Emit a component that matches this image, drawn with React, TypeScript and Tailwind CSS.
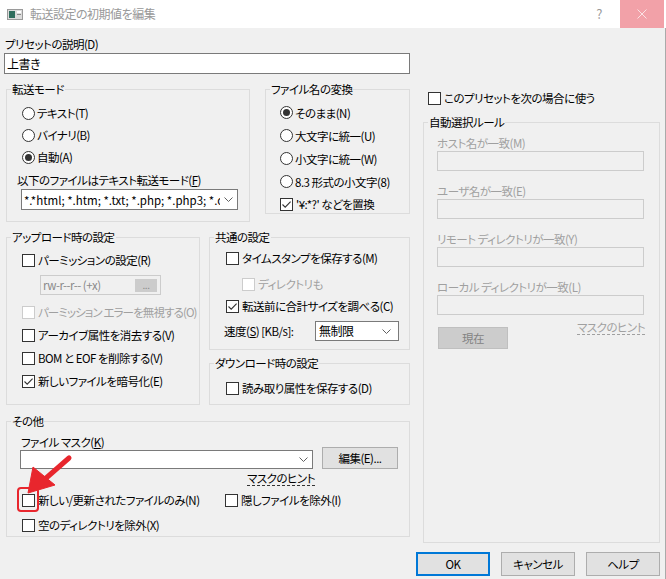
import React from "react";

const Chevron = () => (
  <svg width="9" height="5" viewBox="0 0 9 5">
    <path d="M0.5 0.5 L4.5 4.5 L8.5 0.5" fill="none" stroke="#606060" strokeWidth="1" />
  </svg>
);

const Check = ({
  label,
  checked,
  disabled,
  className = "",
  textClass = "",
}: {
  label: React.ReactNode;
  checked?: boolean;
  disabled?: boolean;
  className?: string;
  textClass?: string;
}) => (
  <div className={`flex items-center h-[16px] ${className}`}>
    <span
      className={`w-[13px] h-[13px] shrink-0 border bg-white flex items-center justify-center ${
        disabled ? "border-[#cccccc]" : "border-[#333333]"
      }`}
    >
      {checked && (
        <svg width="11" height="11" viewBox="0 0 11 11">
          <path d="M1.5 5.5 L4.2 8.2 L9.6 2.6" fill="none" stroke="#333333" strokeWidth="1.1" />
        </svg>
      )}
    </span>
    <span className={`ml-[3px] whitespace-nowrap ${disabled ? "text-[#a0a0a0]" : ""} ${textClass}`}>{label}</span>
  </div>
);

const Radio = ({
  label,
  checked,
  className = "",
}: {
  label: React.ReactNode;
  checked?: boolean;
  className?: string;
}) => (
  <div className={`flex items-center ${className}`}>
    <span className="w-[13px] h-[13px] shrink-0 rounded-full border border-[#333333] bg-white flex items-center justify-center">
      {checked && <span className="w-[7px] h-[7px] rounded-full bg-[#333333]" />}
    </span>
    <span className="ml-[2px] whitespace-nowrap">{label}</span>
  </div>
);

const Group = ({
  title,
  className = "",
  children,
}: {
  title: string;
  className?: string;
  children?: React.ReactNode;
}) => (
  <fieldset className={`border border-[#dcdcdc] shrink-0 min-w-0 ${className}`}>
    <legend className="ml-[4px] px-[1px] leading-[14px]">{title}</legend>
    {children}
  </fieldset>
);

const Mn = ({ c }: { c: string }) => <span className="underline underline-offset-[1px]">{c}</span>;

const DisabledField = ({ label }: { label: string }) => (
  <>
    <div className="h-[16px] leading-[16px] text-[#a0a0a0] whitespace-nowrap">{label}</div>
    <div className="w-[207px] h-[20px] border border-[#cccccc] bg-[#f0f0f0]" />
  </>
);

const Btn = ({ children, primary }: { children: React.ReactNode; primary?: boolean }) => (
  <div
    className={`w-[74px] h-[24px] flex items-center justify-center bg-[#e1e1e1] ${
      primary ? "border-2 border-[#0078d7]" : "border border-[#adadad]"
    }`}
  >
    {children}
  </div>
);

export default function App() {
  return (
    <div className="w-[666px] h-[579px] bg-[#f0f0f0] flex flex-col relative overflow-hidden text-[11.5px] tracking-[-0.5px] leading-[16px] text-black font-['Noto_Sans_CJK_JP',sans-serif] [font-feature-settings:'palt']">
      {/* title bar */}
      <div className="h-[28px] bg-white flex items-center shrink-0">
        <svg className="ml-[7px]" width="16" height="11" viewBox="0 0 16 11">
          <rect x="0.5" y="0.5" width="15" height="10" fill="#dcdcdc" stroke="#9a9a9a" />
          <rect x="2" y="2" width="6" height="7" fill="#2f6e5e" />
          <rect x="10" y="2" width="4" height="2" fill="#ffffff" />
          <rect x="10" y="5" width="4" height="1" fill="#8a8a8a" />
        </svg>
        <span className="ml-[7px] text-[12px] text-[#999999]">転送設定の初期値を編集</span>
        <span className="ml-auto mr-[18px] text-[#9a9a9a] text-[13px]">?</span>
        <div className="w-[44px] h-[28px] mr-[2px] bg-[#f2a1a8] flex items-center justify-center">
          <svg width="10" height="10" viewBox="0 0 10 10">
            <path d="M0.5 0.5 L9.5 9.5 M9.5 0.5 L0.5 9.5" stroke="#fbe2e4" strokeWidth="1" />
          </svg>
        </div>
      </div>

      <div className="flex-1 flex flex-col border-r border-[#aaaaaa]">
        <div className="flex">
          {/* left column */}
          <div className="ml-[4px] w-[406px] flex flex-col">
            <div className="mt-[8px] h-[16px] pl-[1px] whitespace-nowrap">プリセットの説明(D)</div>
            <div className="mt-[1px] h-[21px] border border-[#7a7a7a] bg-white flex items-center pl-[2px] text-[12px]">上書き</div>

            <div className="mt-[8px] flex items-start">
              <Group title="転送モード" className="ml-[2px] w-[244px] h-[140px]">
                <div className="mt-[6px] flex flex-col">
                  <Radio className="ml-[15px] h-[22px]" label="テキスト(T)" />
                  <Radio className="ml-[15px] h-[22px]" label="バイナリ(B)" />
                  <Radio className="ml-[15px] h-[22px]" label="自動(A)" checked />
                  <div className="mt-[4px] ml-[10px] h-[16px] whitespace-nowrap">
                    以下のファイルはテキスト転送モード(<Mn c="F" />)
                  </div>
                  <div className="mt-[1px] ml-[14px] w-[217px] h-[21px] border border-[#7a7a7a] bg-white flex items-center pl-[2px] pr-[4px]">
                    <span className="flex-1 overflow-hidden whitespace-nowrap tracking-normal">
                      *.*html; *.htm; *.txt; *.php; *.php3; *.cgi; *.c; *.cpp; *.h
                    </span>
                    <span className="ml-[4px]">
                      <Chevron />
                    </span>
                  </div>
                </div>
              </Group>

              <Group title="ファイル名の変換" className="ml-[15px] w-[145px] h-[132px]">
                <div className="mt-[5px] ml-[14px] flex flex-col">
                  <Radio className="h-[23px]" label="そのまま(N)" checked />
                  <Radio className="h-[23px]" label="大文字に統一(U)" />
                  <Radio className="h-[23px]" label="小文字に統一(W)" />
                  <Radio className="h-[23px]" label="8.3 形式の小文字(8)" />
                  <Check className="h-[22px]" label="'¥:*?' などを置換" checked />
                </div>
              </Group>
            </div>

            <div className="mt-[8px] flex items-start">
              <Group title="アップロード時の設定" className="ml-[2px] w-[194px] h-[175px]">
                <div className="flex flex-col">
                  <Check className="mt-[8px] ml-[15px]" label="パーミッションの設定(R)" />
                  <div className="mt-[7px] ml-[33px] w-[121px] h-[20px] border border-[#cccccc] bg-[#f0f0f0] flex items-center justify-between pl-[2px] pr-[3px]">
                    <span className="text-[#8a8a8a] whitespace-nowrap">rw-r--r-- (+x)</span>
                    <span className="w-[22px] h-[13px] bg-[#cccccc] text-[#8a8a8a] text-[10px] leading-[10px] flex items-center justify-center">
                      ...
                    </span>
                  </div>
                  <Check
                    className="mt-[9px] ml-[15px]"
                    textClass="tracking-[-0.9px]"
                    label="パーミッション エラーを無視する(O)"
                    disabled
                  />
                  <Check className="mt-[7px] ml-[15px]" label="アーカイブ属性を消去する(V)" />
                  <Check className="mt-[7px] ml-[15px]" label="BOM と EOF を削除する(V)" />
                  <Check className="mt-[7px] ml-[15px]" label="新しいファイルを暗号化(E)" checked />
                </div>
              </Group>

              <div className="ml-[9px] w-[201px] flex flex-col">
                <Group title="共通の設定" className="w-[201px] h-[120px]">
                  <div className="flex flex-col">
                    <Check className="mt-[6px] ml-[16px]" label="タイムスタンプを保存する(M)" />
                    <Check className="mt-[10px] ml-[32px]" label="ディレクトリも" disabled />
                    <Check className="mt-[6px] ml-[16px]" label="転送前に合計サイズを調べる(C)" checked />
                    <div className="mt-[7px] ml-[14px] w-[175px] h-[20px] flex items-center justify-between">
                      <span className="whitespace-nowrap">
                        速度(<Mn c="S" />) [KB/s]:
                      </span>
                      <div className="w-[84px] h-[20px] border border-[#7a7a7a] bg-white flex items-center justify-between pl-[3px] pr-[7px]">
                        <span className="text-[12px]">無制限</span>
                        <Chevron />
                      </div>
                    </div>
                  </div>
                </Group>
                <Group title="ダウンロード時の設定" className="mt-[6px] w-[201px] h-[49px]">
                  <Check className="mt-[10px] ml-[16px]" label="読み取り属性を保存する(D)" />
                </Group>
              </div>
            </div>

            <Group title="その他" className="mt-[9px] ml-[2px] w-[404px] h-[123px]">
              <div className="flex flex-col">
                <div className="mt-[6px] ml-[14px] h-[16px] whitespace-nowrap">
                  ファイル マスク(<Mn c="K" />)
                </div>
                <div className="-mt-[3px] ml-[13px] flex items-end">
                  <div className="w-[293px] h-[19px] border border-[#7a7a7a] bg-white flex items-center justify-end pr-[4px]">
                    <Chevron />
                  </div>
                  <div className="ml-[9px] w-[76px] h-[22px] border border-[#adadad] bg-[#e1e1e1] flex items-center justify-center">
                    編集(E)...
                  </div>
                </div>
                <div className="mt-[3px] ml-[13px] w-[295px] flex justify-end">
                  <span className="leading-[13px] border-b border-dashed border-[#333333] whitespace-nowrap">マスクのヒント</span>
                </div>
                <div className="mt-[6px] ml-[15px] flex">
                  <div className="w-[203px]">
                    <Check label="新しい/更新されたファイルのみ(N)" />
                  </div>
                  <Check label="隠しファイルを除外(I)" />
                </div>
                <Check className="mt-[9px] ml-[15px]" label="空のディレクトリを除外(X)" />
              </div>
            </Group>
          </div>

          {/* right column */}
          <div className="ml-[13px] w-[237px] flex flex-col">
            <Check className="mt-[62px] ml-[5px]" label="このプリセットを次の場合に使う" />
            <Group title="自動選択ルール" className="mt-[9px] w-[237px] h-[428px]">
              <div className="ml-[13px] flex flex-col">
                <div className="mt-[6px]" />
                <DisabledField label="ホスト名が一致(M)" />
                <div className="mt-[12px]" />
                <DisabledField label="ユーザ名が一致(E)" />
                <div className="mt-[12px]" />
                <DisabledField label="リモート ディレクトリが一致(Y)" />
                <div className="mt-[12px]" />
                <DisabledField label="ローカル ディレクトリが一致(L)" />
                <div className="mt-[6px] w-[208px] flex justify-between items-start">
                  <div className="mt-[6px] ml-[1px] w-[70px] h-[22px] bg-[#cccccc] border border-[#bfbfbf] text-[#838383] flex items-center justify-center">
                    現在
                  </div>
                  <span className="leading-[13px] text-[#a0a0a0] border-b border-dashed border-[#a0a0a0] whitespace-nowrap">
                    マスクのヒント
                  </span>
                </div>
              </div>
            </Group>
          </div>
        </div>

        <div className="mt-[9px] pr-[5px] flex justify-end gap-[11px]">
          <Btn primary>OK</Btn>
          <Btn>キャンセル</Btn>
          <Btn>ヘルプ</Btn>
        </div>
      </div>

      {/* annotation */}
      <div className="absolute left-[17px] top-[487px] w-[22px] h-[25px] border-2 border-[#e8262d] rounded-[4px]" />
      <svg className="absolute left-[20px] top-[450px]" width="60" height="50" viewBox="20 450 60 50">
        <path d="M69 458 L45 479" stroke="#e8262d" strokeWidth="5" strokeLinecap="round" />
        <path d="M28 493 L33 467 L55 485 Z" fill="#e8262d" stroke="#e8262d" strokeWidth="1" strokeLinejoin="round" />
      </svg>
    </div>
  );
}
